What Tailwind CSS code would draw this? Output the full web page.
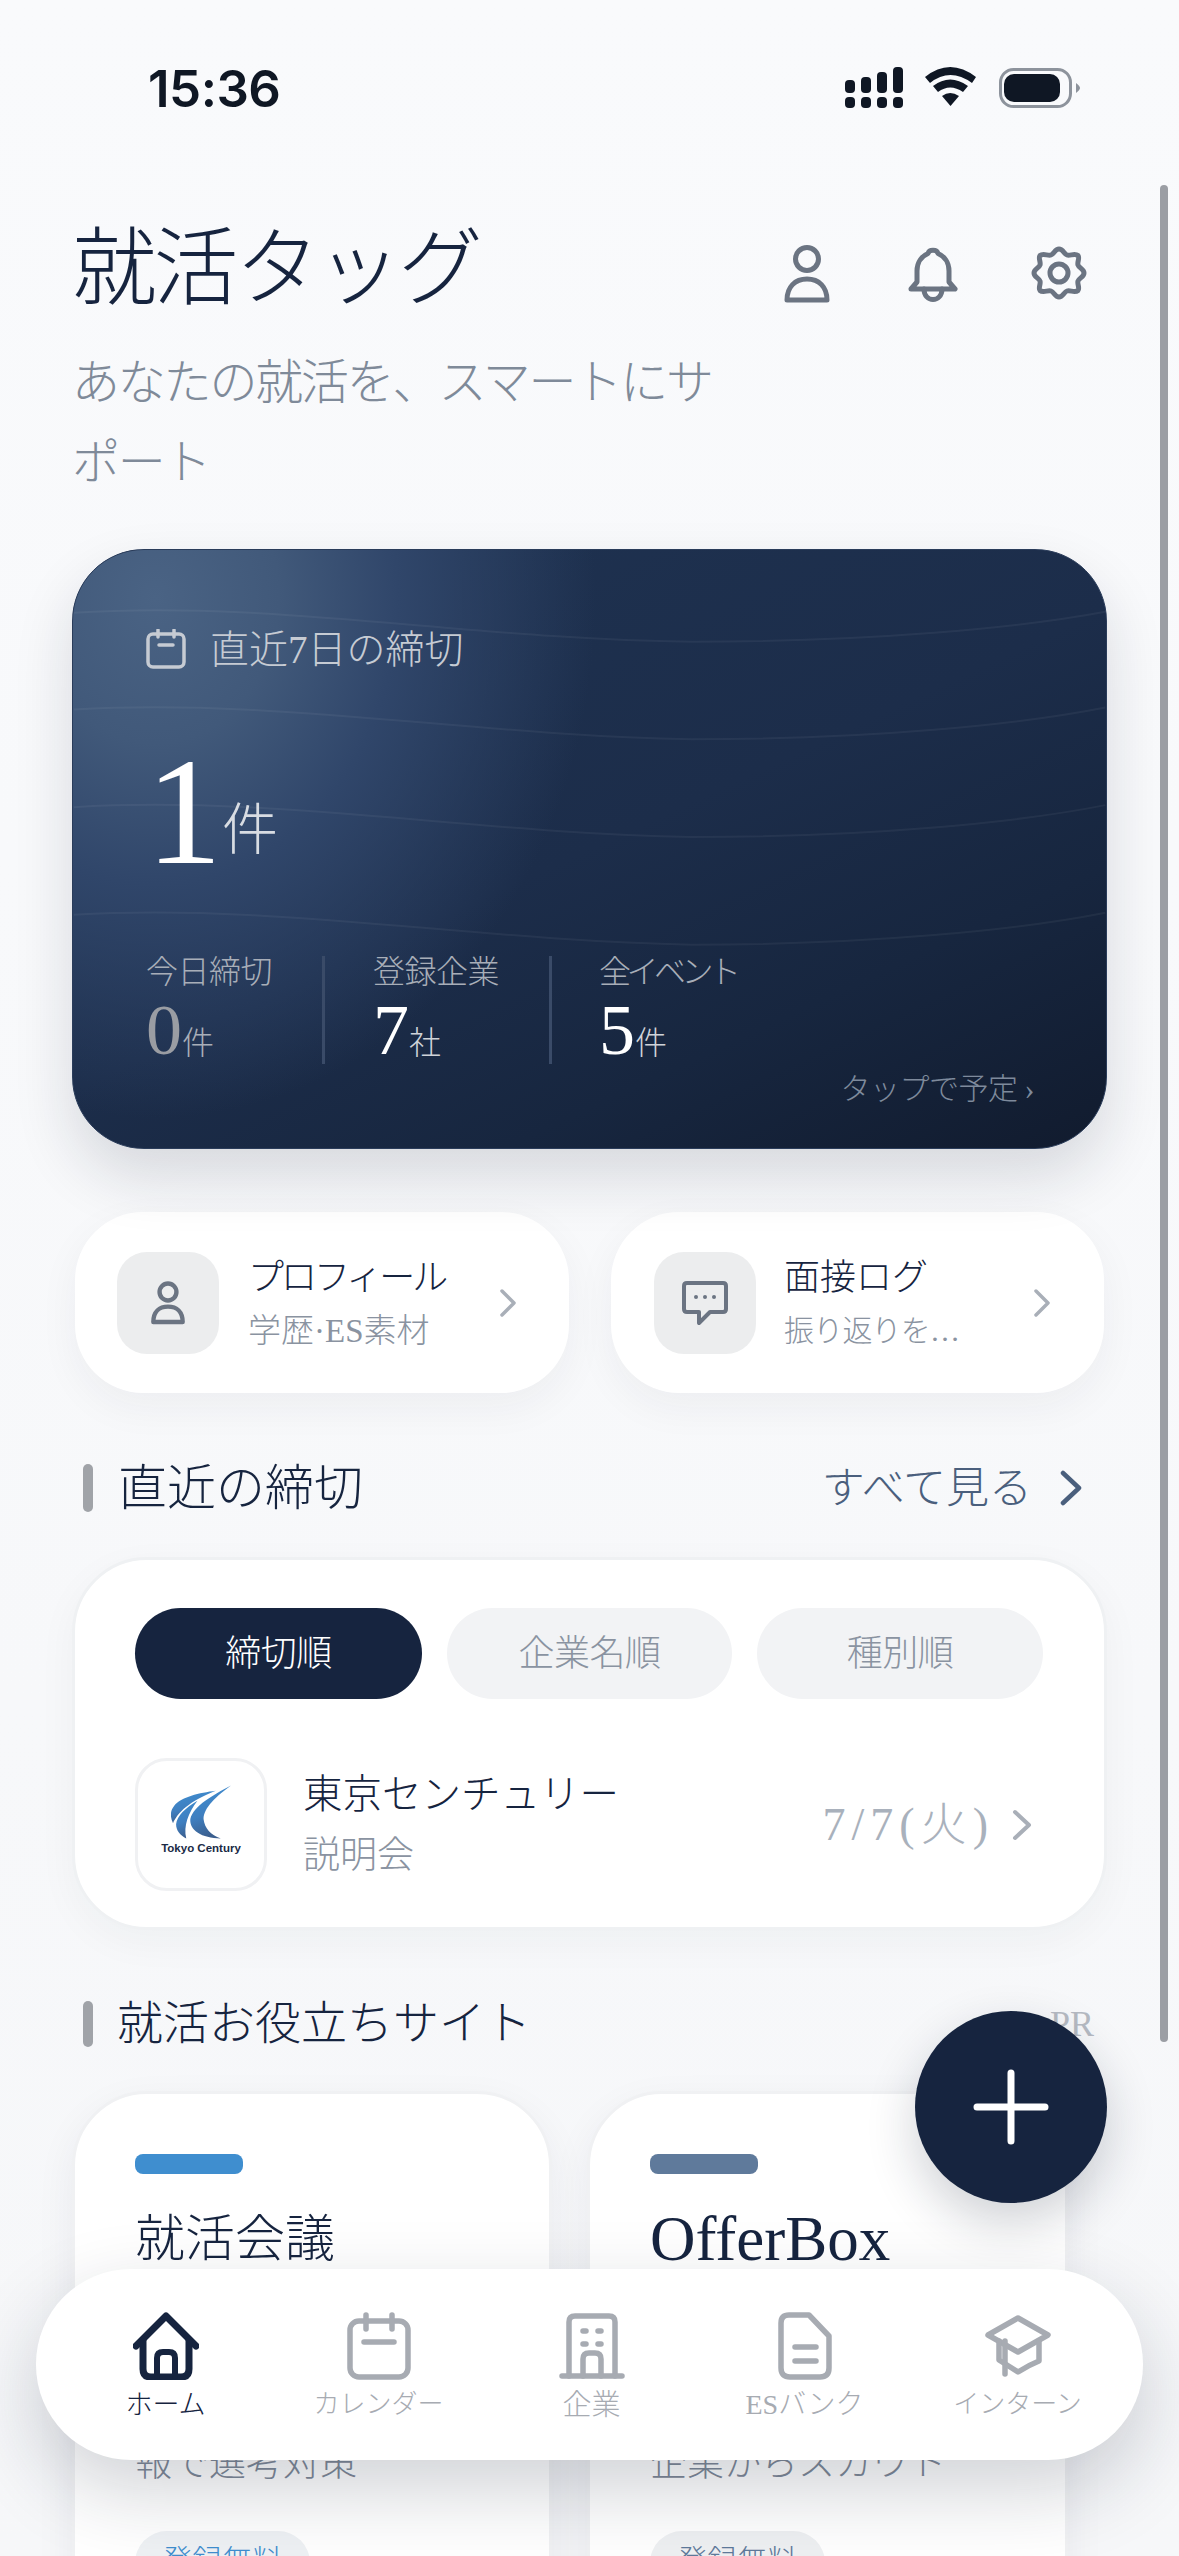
<!DOCTYPE html>
<html lang="ja">
<head>
<meta charset="utf-8">
<script src="https://cdn.jsdelivr.net/npm/@tailwindcss/browser@4"></script>
</head>
<body>
<div class="relative w-[1179px] h-[2556px] overflow-hidden bg-[linear-gradient(#f9fafc,#f6f7f9)] font-light text-[#16243f] [font-family:'Liberation_Serif','Noto_Sans_CJK_JP',serif]">

  <!-- status bar -->
  <div class="flex h-[176px] items-center justify-between pl-[148px] pr-[99px]">
    <span class="[font-family:Inter,sans-serif] text-[51px] font-semibold leading-none tracking-[-0.5px] text-[#0f1724]">15:36</span>
    <svg class="h-[50px] w-[240px]" viewBox="0 0 240 50" fill="#0f1724">
      <rect x="5" y="17" width="10" height="13" rx="4"/><rect x="21" y="14" width="10" height="16" rx="4"/><rect x="37" y="9" width="10" height="21" rx="4"/><rect x="53" y="4" width="10" height="26" rx="4"/>
      <rect x="5" y="34" width="10" height="11" rx="4"/><rect x="21" y="34" width="10" height="11" rx="4"/><rect x="37" y="34" width="10" height="11" rx="4"/><rect x="53" y="34" width="10" height="11" rx="4"/>
      <path d="M85 14 Q110 -6 136 14 L132 20 Q110 4 90 20 Z"/><path d="M93 23 Q110 10 128 23 L123 29 Q110 20 98 29 Z"/><path d="M102 33 Q110 27 119 33 L110.500 43 Z"/>
      <rect x="160.500" y="6.500" width="70" height="37" rx="13" fill="none" stroke="#8d939c" stroke-width="3"/>
      <rect x="164" y="11" width="56" height="28" rx="10"/>
      <path d="M236 20 L236 30 Q240 27 240 25 Q240 23 236 20 Z" fill="#8d939c"/>
    </svg>
  </div>

  <!-- header -->
  <div class="flex justify-between pl-[72px] pr-[90px]">
    <div class="w-[650px]">
      <h1 class="mt-[45px] text-[85px] font-light leading-[96px] tracking-[-3.5px]">就活タッグ</h1>
      <p class="mt-[26px] text-[48px] leading-[80px] tracking-[-2.2px] text-[#7f8a99]">あなたの就活を、スマートにサポート</p>
    </div>
    <div class="mt-[67px] flex h-[60px] gap-[66px] text-[#6b7482]">
      <svg class="size-[60px]" viewBox="0 0 60 60" fill="none" stroke="currentColor" stroke-width="5" stroke-linejoin="round" stroke-linecap="round">
        <circle cx="30" cy="16" r="11.500"/><path d="M10 57 C10 44 18 36 30 36 C42 36 50 44 50 57 Z"/>
      </svg>
      <svg class="size-[60px]" viewBox="0 0 60 60" fill="none" stroke="currentColor" stroke-width="5" stroke-linejoin="round" stroke-linecap="round">
        <path d="M8 46 L14 39 V28 C14 19 19 13 25 10.500 C26 6 34 6 35 10.500 C41 13 46 19 46 28 V39 L52 46 Z"/><path d="M21 46 C21 60 39 60 39 46"/>
      </svg>
      <svg class="size-[60px]" viewBox="0 0 60 60" fill="none" stroke="currentColor" stroke-width="5" stroke-linejoin="round" stroke-linecap="round">
        <path d="M30 6 C34 6 35 11 38 12 C41 13 46 10 49 12.500 C51 15 48 19 49 22 C50 25 55 26 55 30 C55 34 50 35 49 38 C48 41 51 45 49 47.500 C46 50 41 47 38 48 C35 49 34 54 30 54 C26 54 25 49 22 48 C19 47 14 50 11 47.500 C9 45 12 41 11 38 C10 35 5 34 5 30 C5 26 10 25 11 22 C12 19 9 15 11 12.500 C14 10 19 13 22 12 C25 11 26 6 30 6 Z"/><circle cx="30" cy="30" r="9"/>
      </svg>
    </div>
  </div>

  <!-- hero -->
  <div class="relative ml-[72px] mt-[46px] h-[600px] w-[1035px] overflow-hidden rounded-[72px] border border-[#2a3c5a] bg-[radial-gradient(ellipse_440px_520px_at_8%_8%,#4a6384_0%,#41597a_28%,#30466a_55%,rgba(30,49,80,0)_100%),linear-gradient(155deg,#1f3352_0%,#1c2d4a_50%,#17263f_74%,#111b2e_100%)] shadow-[0_28px_60px_rgba(20,30,50,0.14)]">
    <svg class="absolute inset-0 h-full w-full" viewBox="0 0 1035 600" fill="none" stroke="#ffffff" stroke-opacity="0.05" stroke-width="2">
      <path d="M0 63 C200 50 400 90 620 92 C800 92 950 78 1035 62"/>
      <path d="M0 160 C200 148 400 186 620 190 C800 190 950 175 1035 158"/>
      <path d="M0 258 C200 246 400 284 620 288 C800 288 950 273 1035 256"/>
      <path d="M0 366 C200 354 400 392 620 396 C800 396 950 381 1035 364"/>
    </svg>
    <div class="relative flex h-full flex-col pl-[73px]">
      <div class="mt-[79px] flex h-[40px] items-center gap-[24px] text-[39px] leading-none text-[#c6cbd3]">
        <svg class="size-[40px] shrink-0" viewBox="0 0 40 40" fill="none" stroke="#c6cbd3" stroke-width="3.500" stroke-linecap="round" stroke-linejoin="round"><rect x="2" y="5" width="36" height="33" rx="5"/><path d="M12 1V8M28 1V8M13 16H27"/></svg>
        <span>直近7日の締切</span>
      </div>
      <div class="mt-[58px] flex h-[170px] items-baseline">
        <span class="text-[152px] leading-[170px] text-white">1</span>
        <span class="-translate-y-[14px] text-[56px] leading-none text-[#d8dce2]">件</span>
      </div>
      <div class="mt-[59px] flex h-[108px]">
        <div class="w-[176px]">
          <p class="text-[32px] leading-[32px] tracking-[-0.5px] text-[#a8aeb8]">今日締切</p>
          <p class="mt-[6px] flex items-baseline leading-[72px]"><span class="text-[72px] text-[#9a9da3]">0</span><span class="text-[32px] text-[#a8aeb8]">件</span></p>
        </div>
        <div class="h-full w-[3px] bg-[#3a4b68]"></div>
        <div class="w-[224px] pl-[48px]">
          <p class="text-[32px] leading-[32px] tracking-[-0.5px] text-[#a8aeb8]">登録企業</p>
          <p class="mt-[6px] flex items-baseline leading-[72px]"><span class="text-[72px] text-white">7</span><span class="text-[32px] text-[#cfd3d9]">社</span></p>
        </div>
        <div class="h-full w-[3px] bg-[#3a4b68]"></div>
        <div class="pl-[47px]">
          <p class="text-[32px] leading-[32px] tracking-[-4.5px] text-[#a8aeb8]">全イベント</p>
          <p class="mt-[6px] flex items-baseline leading-[72px]"><span class="text-[72px] text-white">5</span><span class="text-[32px] text-[#cfd3d9]">件</span></p>
        </div>
      </div>
      <p class="mt-[8px] pr-[72px] text-right text-[30px] leading-[34px] tracking-[-0.5px] text-[#7e8a9c]">タップで予定 ›</p>
    </div>
  </div>

  <!-- quick cards -->
  <div class="ml-[75px] mt-[63px] flex w-[1029px] justify-between">
    <div class="flex h-[181px] w-[494px] items-center rounded-[68px] bg-white pl-[42px] shadow-[0_14px_40px_rgba(30,40,60,0.05)]">
      <div class="flex h-[102px] w-[102px] shrink-0 items-center justify-center rounded-[30px] bg-[#ecedee]">
        <svg class="size-[44px]" viewBox="0 0 60 60" fill="none" stroke="#6b7482" stroke-width="6" stroke-linejoin="round"><circle cx="30" cy="15" r="11.500"/><path d="M10 56 C10 42 18 35 30 35 C42 35 50 42 50 56 Z"/></svg>
      </div>
      <div class="ml-[29px] w-[247px]">
        <p class="text-[36px] leading-[46px] tracking-[-3px] text-[#16243f]">プロフィール</p>
        <p class="mt-[10px] text-[33px] leading-[40px] text-[#8a93a1]">学歴·ES素材</p>
      </div>
      <svg class="ml-[4px] h-[28px] w-[18px]" viewBox="0 0 18 28" fill="none" stroke="#a9afb8" stroke-width="3.500" stroke-linecap="round" stroke-linejoin="round"><path d="M3 2 L15 14 L3 26"/></svg>
    </div>
    <div class="flex h-[181px] w-[493px] items-center rounded-[68px] bg-white pl-[43px] shadow-[0_14px_40px_rgba(30,40,60,0.05)]">
      <div class="flex h-[102px] w-[102px] shrink-0 items-center justify-center rounded-[30px] bg-[#ecedee]">
        <svg class="size-[46px]" viewBox="0 0 46 46" fill="none" stroke="#6b7482" stroke-width="4" stroke-linejoin="round"><path d="M5 3 H41 Q44 3 44 6 V29 Q44 32 41 32 H28 L17 43 V32 H5 Q2 32 2 29 V6 Q2 3 5 3 Z"/><g fill="#6b7482" stroke="none"><circle cx="14" cy="17" r="2"/><circle cx="23" cy="17" r="2"/><circle cx="32" cy="17" r="2"/></g></svg>
      </div>
      <div class="ml-[28px] w-[249px]">
        <p class="text-[36px] leading-[46px] text-[#16243f]">面接ログ</p>
        <p class="mt-[10px] text-[30px] leading-[40px] tracking-[-0.8px] text-[#8a93a1]">振り返りを…</p>
      </div>
      <svg class="h-[28px] w-[18px]" viewBox="0 0 18 28" fill="none" stroke="#a9afb8" stroke-width="3.500" stroke-linecap="round" stroke-linejoin="round"><path d="M3 2 L15 14 L3 26"/></svg>
    </div>
  </div>

  <!-- section: deadlines -->
  <div class="ml-[83px] mt-[71px] flex h-[48px] w-[1000px] items-center">
    <div class="h-[48px] w-[10px] rounded-full bg-[#a0a3a8]"></div>
    <h2 class="ml-[25px] text-[49px] font-light leading-none text-[#16243f]">直近の締切</h2>
    <span class="ml-auto text-[43px] leading-none text-[#4a5f7d]">すべて見る</span>
    <svg class="ml-[27px] h-[36px] w-[24px]" viewBox="0 0 24 36" fill="none" stroke="#4a5f7d" stroke-width="4.500" stroke-linecap="round" stroke-linejoin="round"><path d="M4 3 L20 18 L4 33"/></svg>
  </div>

  <div class="ml-[72px] mt-[45px] h-[373px] w-[1035px] rounded-[75px] border-[3px] border-[#eff1f3] bg-white px-[60px] pt-[48px] shadow-[0_12px_40px_rgba(30,40,60,0.04)]">
    <div class="flex gap-[25px]">
      <div class="flex h-[91px] w-[287px] items-center justify-center rounded-full bg-[#16243f] text-[36px] tracking-[-0.5px] text-white">締切順</div>
      <div class="flex h-[91px] w-[285px] items-center justify-center rounded-full bg-[#f2f3f5] text-[36px] tracking-[-0.5px] text-[#8a93a1]">企業名順</div>
      <div class="flex h-[91px] w-[286px] items-center justify-center rounded-full bg-[#f2f3f5] text-[36px] tracking-[-0.5px] text-[#8a93a1]">種別順</div>
    </div>
    <div class="mt-[59px] flex h-[133px] items-center">
      <div class="relative flex h-[133px] w-[132px] shrink-0 flex-col items-center rounded-[32px] border-[3px] border-[#f0f1f3] bg-white">
        <svg class="mt-[24px] h-[54px] w-[60px]" viewBox="0 0 59 52">
          <defs><linearGradient id="tc" x1="0" y1="0" x2="0.3" y2="1"><stop offset="0" stop-color="#3f8fd2"/><stop offset="0.6" stop-color="#3f7fc0"/><stop offset="1" stop-color="#3b5f8f"/></linearGradient></defs>
          <path fill="url(#tc)" d="M59 0 C42 9 22 20 19 33 C18 44 30 52 49 52 C39 49 33 42 32 33 C32 22 45 10 59 0 Z"/>
          <path fill="url(#tc)" d="M44 5 C28 7 10 11 3 20 C-1 25 -1 31 2 37 C6 27 18 15 44 5 Z"/>
          <path fill="url(#tc)" d="M26 15 C14 22 6 30 5 38 C5 44 9 49 15 52 C12 40 17 27 26 15 Z"/>
        </svg>
        <span class="mt-[4px] text-[11.500px] font-bold leading-none text-[#1a2a45] [font-family:'Liberation_Sans',sans-serif]">Tokyo Century</span>
      </div>
      <div class="ml-[36px]">
        <p class="text-[39.500px] leading-[48px] text-[#16243f]">東京センチュリー</p>
        <p class="mt-[15px] text-[37px] leading-[44px] text-[#8a93a1]">説明会</p>
      </div>
      <span class="ml-auto text-[46px] leading-none tracking-[6px] text-[#a9b1bc]">7/7(火)</span>
      <svg class="ml-[18px] mr-[12px] h-[32px] w-[20px]" viewBox="0 0 20 32" fill="none" stroke="#a9afb8" stroke-width="4" stroke-linecap="round" stroke-linejoin="round"><path d="M3 3 L17 16 L3 29"/></svg>
    </div>
  </div>

  <!-- section: sites -->
  <div class="ml-[83px] mt-[71px] flex h-[46px] w-[1011px] items-center">
    <div class="h-[46px] w-[10px] rounded-full bg-[#a0a3a8]"></div>
    <h2 class="ml-[24px] text-[46px] font-light leading-none text-[#16243f]">就活お役立ちサイト</h2>
    <span class="ml-auto text-[36px] leading-none text-[#b5bac2]">PR</span>
  </div>

  <div class="ml-[72px] mt-[44px] flex gap-[35px]">
    <div class="h-[600px] w-[480px] shrink-0 rounded-[75px] border-[3px] border-[#f0f1f3] bg-white pl-[60px] pt-[60px] shadow-[0_14px_40px_rgba(30,40,60,0.06)]">
      <div class="h-[20px] w-[108px] rounded-[8px] bg-[#3f8ecf]"></div>
      <h3 class="mt-[33px] text-[50px] font-light leading-[64px]">就活会議</h3>
      <p class="mt-[109px] text-[37px] leading-[56px] text-[#7f8a99]">企業の口コミ・選考情<br>報で選考対策</p>
      <div class="mt-[39px] inline-flex h-[64px] w-[175px] justify-center rounded-full bg-[#eef1f4] pt-[15px] text-[30px] leading-none text-[#3f8ecf]">登録無料</div>
    </div>
    <div class="h-[600px] w-[481px] shrink-0 rounded-[75px] border-[3px] border-[#f0f1f3] bg-white pl-[60px] pt-[60px] shadow-[0_14px_40px_rgba(30,40,60,0.06)]">
      <div class="h-[20px] w-[108px] rounded-[8px] bg-[#5f7a9b]"></div>
      <h3 class="mt-[33px] text-[63px] font-light leading-[64px]">OfferBox</h3>
      <p class="mt-[109px] text-[37px] leading-[56px] text-[#7f8a99]">プロフィールを見た<br>企業からスカウト</p>
      <div class="mt-[39px] inline-flex h-[64px] w-[175px] justify-center rounded-full bg-[#eef0f2] pt-[15px] text-[30px] leading-none text-[#5f7a9b]">登録無料</div>
    </div>
  </div>

  <!-- scrollbar -->
  <div class="absolute left-[1160px] top-[185px] h-[1857px] w-[8px] rounded-full bg-[#9b9ea4]"></div>

  <!-- fab -->
  <div class="absolute left-[915px] top-[2011px] flex size-[192px] items-center justify-center rounded-full bg-[#16243f] shadow-[0_20px_50px_rgba(20,30,50,0.2)]">
    <svg class="size-[76px]" viewBox="0 0 76 76" stroke="#ffffff" stroke-width="7" stroke-linecap="round"><path d="M38 4 V72 M4 38 H72"/></svg>
  </div>

  <!-- tab bar -->
  <nav class="absolute left-[36px] top-[2269px] grid h-[191px] w-[1107px] grid-cols-[repeat(5,213px)] rounded-[95px] bg-white pl-[23px] shadow-[0_30px_80px_rgba(20,30,50,0.2)]">
    <div class="flex flex-col items-center pt-[43px] text-[#16243f]">
      <svg class="h-[68px] w-[66px]" viewBox="0 0 66 68" fill="none" stroke="#16243f" stroke-width="7" stroke-linecap="round" stroke-linejoin="round"><path d="M3 34 L33 4 L63 34"/><path d="M10 28 V57 Q10 65 18 65 H48 Q56 65 56 57 V28"/><path d="M24 64 V46 Q24 40 30 40 H36 Q42 40 42 46 V64" stroke-width="6"/></svg>
      <span class="mt-[8px] text-[27px] leading-[34px]">ホーム</span>
    </div>
    <div class="flex flex-col items-center pt-[43px] text-[#a7abb2]">
      <svg class="h-[68px] w-[64px]" viewBox="0 0 64 68" fill="none" stroke="#a7abb2" stroke-width="5.500" stroke-linecap="round" stroke-linejoin="round"><rect x="3" y="9" width="58" height="56" rx="9"/><path d="M19 3 V17 M45 3 V17 M17 30 H47"/></svg>
      <span class="mt-[8px] text-[26px] leading-[34px]">カレンダー</span>
    </div>
    <div class="flex flex-col items-center pt-[43px] text-[#a7abb2]">
      <svg class="h-[68px] w-[66px]" viewBox="0 0 66 68" fill="none" stroke="#a7abb2" stroke-width="5.500" stroke-linecap="round" stroke-linejoin="round"><path d="M10 64 V10 Q10 4 16 4 H50 Q56 4 56 10 V64"/><path d="M3 64 H63"/><path d="M24 64 V47 Q24 41 30 41 H36 Q42 41 42 47 V64"/><path d="M24 19 H27 M39 19 H42 M24 32 H27 M39 32 H42"/></svg>
      <span class="mt-[8px] text-[29px] leading-[34px]">企業</span>
    </div>
    <div class="flex flex-col items-center pt-[43px] text-[#a7abb2]">
      <svg class="h-[68px] w-[54px]" viewBox="0 0 54 68" fill="none" stroke="#a7abb2" stroke-width="5.500" stroke-linecap="round" stroke-linejoin="round"><path d="M11 3 H31 L51 24 V56 Q51 65 42 65 H12 Q3 65 3 56 V11 Q3 3 11 3 Z"/><path d="M17 35 H38 M17 49 H38"/></svg>
      <span class="mt-[8px] text-[28px] leading-[34px]">ESバンク</span>
    </div>
    <div class="flex flex-col items-center pt-[43px] text-[#a7abb2]">
      <svg class="h-[68px] w-[66px]" viewBox="0 0 66 68" fill="none" stroke="#a7abb2" stroke-width="5.500" stroke-linecap="round" stroke-linejoin="round"><path d="M33 6 L63 23 L33 40 L3 23 Z"/><path d="M14 29 V48 Q22 53 33 60 Q44 53 54 49 V29"/><path d="M20 29 V62"/></svg>
      <span class="mt-[8px] text-[26px] leading-[34px]">インターン</span>
    </div>
  </nav>
</div>
</body>
</html>
